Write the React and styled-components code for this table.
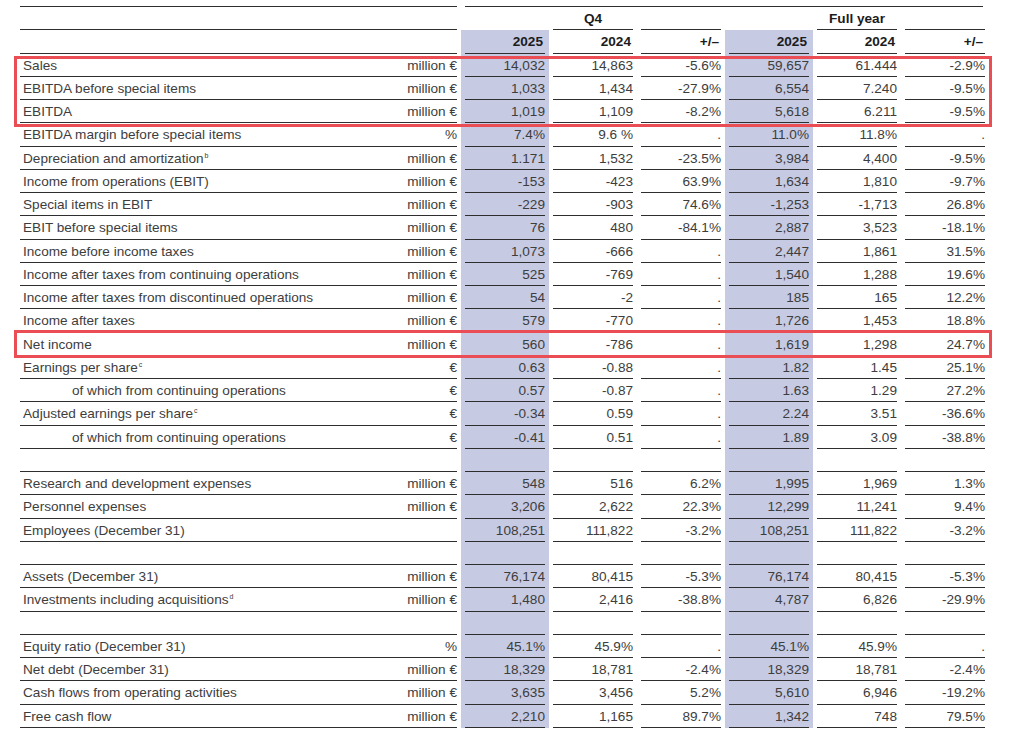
import React from "react";
import styled, { createGlobalStyle } from "styled-components";

const GlobalStyle = createGlobalStyle`
  html, body {
    margin: 0;
    padding: 0;
    background: #fff;
    overflow: hidden;
  }
  body {
    font-family: "Liberation Sans", Arial, sans-serif;
    font-size: 13.6px;
    color: #3d3d3d;
  }
`;

const SHADE = "#c6cae3";
const RULE = "#2e2e2e";

const Page = styled.div`
  padding: 6px 0 0 20px;
`;

const Table = styled.div`
  display: flex;
  flex-direction: column;
  width: 969px;
`;

const TopRule = styled.div`
  display: grid;
  grid-template-columns: 441px 528px;
  height: 1px;

  &::before,
  &::after {
    content: "";
    background: ${RULE};
  }
  &::before {
    margin-right: 4px;
  }
  &::after {
    margin: 0 6px 0 4px;
  }
`;

const Row = styled.div`
  display: grid;
  grid-template-columns: 441px repeat(6, 88px);
  height: 23.25px;
`;

const LabelCell = styled.div`
  padding-right: 4px;
  display: flex;
`;

const Cell = styled.div`
  padding: 0 4px;
  display: flex;
  background: ${(p) => (p.$shade ? SHADE : "transparent")};
`;

const Line = styled.div`
  flex: 1;
  display: flex;
  align-items: center;
  justify-content: ${(p) => p.$justify || "flex-end"};
  border-bottom: 1px solid ${(p) => (p.$rule === false ? "transparent" : RULE)};
  white-space: nowrap;
  padding-top: 1px;
`;

const Label = styled.span`
  flex: 1;
  padding-left: ${(p) => (p.$indent ? "52px" : "3px")};
`;

const Unit = styled.span`
  text-align: right;
`;

const Sup = styled.sup`
  font-size: 7px;
  vertical-align: 5px;
  line-height: 0;
  margin-left: 1px;
`;

const Head = styled.span`
  font-weight: bold;
  color: #1c1c1c;
  padding-right: ${(p) => (p.$center ? "0" : "2px")};
`;

const Highlight = styled.div`
  position: relative;

  &::after {
    content: "";
    position: absolute;
    left: -6px;
    right: -3px;
    top: ${(p) => p.$top}px;
    bottom: ${(p) => p.$bottom}px;
    border: 3px solid #eb4d55;
    pointer-events: none;
  }
`;

const rows = [
  { label: "Sales", unit: "million €", v: ["14,032", "14,863", "-5.6%", "59,657", "61.444", "-2.9%"] },
  { label: "EBITDA before special items", unit: "million €", v: ["1,033", "1,434", "-27.9%", "6,554", "7.240", "-9.5%"] },
  { label: "EBITDA", unit: "million €", v: ["1,019", "1,109", "-8.2%", "5,618", "6.211", "-9.5%"] },
  { label: "EBITDA margin before special items", unit: "%", v: ["7.4%", "9.6 %", ".", "11.0%", "11.8%", "."] },
  { label: "Depreciation and amortization", sup: "b", unit: "million €", v: ["1.171", "1,532", "-23.5%", "3,984", "4,400", "-9.5%"] },
  { label: "Income from operations (EBIT)", unit: "million €", v: ["-153", "-423", "63.9%", "1,634", "1,810", "-9.7%"] },
  { label: "Special items in EBIT", unit: "million €", v: ["-229", "-903", "74.6%", "-1,253", "-1,713", "26.8%"] },
  { label: "EBIT before special items", unit: "million €", v: ["76", "480", "-84.1%", "2,887", "3,523", "-18.1%"] },
  { label: "Income before income taxes", unit: "million €", v: ["1,073", "-666", ".", "2,447", "1,861", "31.5%"] },
  { label: "Income after taxes from continuing operations", unit: "million €", v: ["525", "-769", ".", "1,540", "1,288", "19.6%"] },
  { label: "Income after taxes from discontinued operations", unit: "million €", v: ["54", "-2", ".", "185", "165", "12.2%"] },
  { label: "Income after taxes", unit: "million €", v: ["579", "-770", ".", "1,726", "1,453", "18.8%"] },
  { label: "Net income", unit: "million €", v: ["560", "-786", ".", "1,619", "1,298", "24.7%"] },
  { label: "Earnings per share", sup: "c", unit: "€", v: ["0.63", "-0.88", ".", "1.82", "1.45", "25.1%"] },
  { label: "of which from continuing operations", indent: true, unit: "€", v: ["0.57", "-0.87", ".", "1.63", "1.29", "27.2%"] },
  { label: "Adjusted earnings per share", sup: "c", unit: "€", v: ["-0.34", "0.59", ".", "2.24", "3.51", "-36.6%"] },
  { label: "of which from continuing operations", indent: true, unit: "€", v: ["-0.41", "0.51", ".", "1.89", "3.09", "-38.8%"] },
  null,
  { label: "Research and development expenses", unit: "million €", v: ["548", "516", "6.2%", "1,995", "1,969", "1.3%"] },
  { label: "Personnel expenses", unit: "million €", v: ["3,206", "2,622", "22.3%", "12,299", "11,241", "9.4%"] },
  { label: "Employees (December 31)", unit: "", v: ["108,251", "111,822", "-3.2%", "108,251", "111,822", "-3.2%"] },
  null,
  { label: "Assets (December 31)", unit: "million €", v: ["76,174", "80,415", "-5.3%", "76,174", "80,415", "-5.3%"] },
  { label: "Investments including acquisitions", sup: "d", unit: "million €", v: ["1,480", "2,416", "-38.8%", "4,787", "6,826", "-29.9%"] },
  null,
  { label: "Equity ratio (December 31)", unit: "%", v: ["45.1%", "45.9%", ".", "45.1%", "45.9%", "."] },
  { label: "Net debt (December 31)", unit: "million €", v: ["18,329", "18,781", "-2.4%", "18,329", "18,781", "-2.4%"] },
  { label: "Cash flows from operating activities", unit: "million €", v: ["3,635", "3,456", "5.2%", "5,610", "6,946", "-19.2%"] },
  { label: "Free cash flow", unit: "million €", v: ["2,210", "1,165", "89.7%", "1,342", "748", "79.5%"] },
];

const shaded = (i) => i === 0 || i === 3;

const DataRow = ({ row }) => (
  <Row>
    <LabelCell>
      <Line $justify="space-between">
        {row && (
          <>
            <Label $indent={row.indent}>
              {row.label}
              {row.sup && <Sup>{row.sup}</Sup>}
            </Label>
            <Unit>{row.unit}</Unit>
          </>
        )}
      </Line>
    </LabelCell>
    {[0, 1, 2, 3, 4, 5].map((i) => (
      <Cell key={i} $shade={shaded(i)}>
        <Line>{row ? row.v[i] : ""}</Line>
      </Cell>
    ))}
  </Row>
);

const App = () => {
  const body = rows.map((row, i) => <DataRow key={i} row={row} />);

  return (
    <Page>
      <GlobalStyle />
      <Table>
        <TopRule />
        <Row>
          <LabelCell>
            <Line />
          </LabelCell>
          <Cell>
            <Line $rule={false} />
          </Cell>
          <Cell>
            <Line $justify="center">
              <Head $center>Q4</Head>
            </Line>
          </Cell>
          <Cell>
            <Line />
          </Cell>
          <Cell>
            <Line $rule={false} />
          </Cell>
          <Cell>
            <Line $justify="center">
              <Head $center>Full year</Head>
            </Line>
          </Cell>
          <Cell>
            <Line />
          </Cell>
        </Row>
        <Row>
          <LabelCell>
            <Line />
          </LabelCell>
          {["2025", "2024", "+/–", "2025", "2024", "+/–"].map((h, i) => (
            <Cell key={i} $shade={shaded(i)}>
              <Line>
                <Head>{h}</Head>
              </Line>
            </Cell>
          ))}
        </Row>
        <Highlight $top={2} $bottom={-4}>
          {body.slice(0, 3)}
        </Highlight>
        {body.slice(3, 12)}
        <Highlight $top={-3} $bottom={-2}>
          {body.slice(12, 13)}
        </Highlight>
        {body.slice(13)}
      </Table>
    </Page>
  );
};

export default App;
